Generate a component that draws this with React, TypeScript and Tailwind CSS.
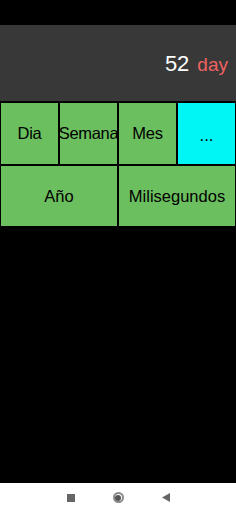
export default function App() {
  const topRow = ["Dia", "Semana", "Mes"];

  return (
    <div
      className="w-[236px] h-[512px] bg-black flex flex-col overflow-hidden"
      style={{ fontFamily: '"Liberation Sans", Arial, sans-serif' }}
    >
      {/* status bar */}
      <div className="h-[25px] bg-black" />

      {/* display */}
      <div className="h-[76px] bg-[#383838] flex items-center justify-end pr-[8px] pt-[2px]">
        <span className="text-white text-[22px] leading-none">52</span>
        <span className="text-[#f06262] text-[19px] leading-none ml-[8px]">day</span>
      </div>

      {/* buttons */}
      <div className="mt-[1px] grid grid-cols-4">
        {topRow.map((label) => (
          <button
            key={label}
            className="h-[63px] bg-[#6cbf5f] border border-black text-black text-[16.5px] flex items-center justify-center whitespace-nowrap overflow-visible tracking-[-0.3px]"
          >
            {label}
          </button>
        ))}
        <button className="h-[63px] bg-[#00f5f5] border border-black text-black text-[17px] flex items-center justify-center pt-[4px]">
          ...
        </button>
      </div>
      <div className="grid grid-cols-2">
        <button className="h-[62px] bg-[#6cbf5f] border border-black text-black text-[16.5px] flex items-center justify-center">
          Año
        </button>
        <button className="h-[62px] bg-[#6cbf5f] border border-black text-black text-[16.5px] flex items-center justify-center">
          Milisegundos
        </button>
      </div>

      <div className="flex-1" />

      {/* nav bar */}
      <div className="h-[29px] bg-white flex items-center justify-center gap-[38px]">
        <div className="w-[8px] h-[8px] bg-[#666]" />
        <div className="w-[11px] h-[11px] rounded-full border-[2px] border-[#888] flex items-center justify-center">
          <div className="w-[6px] h-[6px] rounded-full bg-[#555]" />
        </div>
        <svg width="8" height="9" viewBox="0 0 8 9">
          <polygon points="8,0 8,9 0,4.5" fill="#666" />
        </svg>
      </div>
    </div>
  );
}
